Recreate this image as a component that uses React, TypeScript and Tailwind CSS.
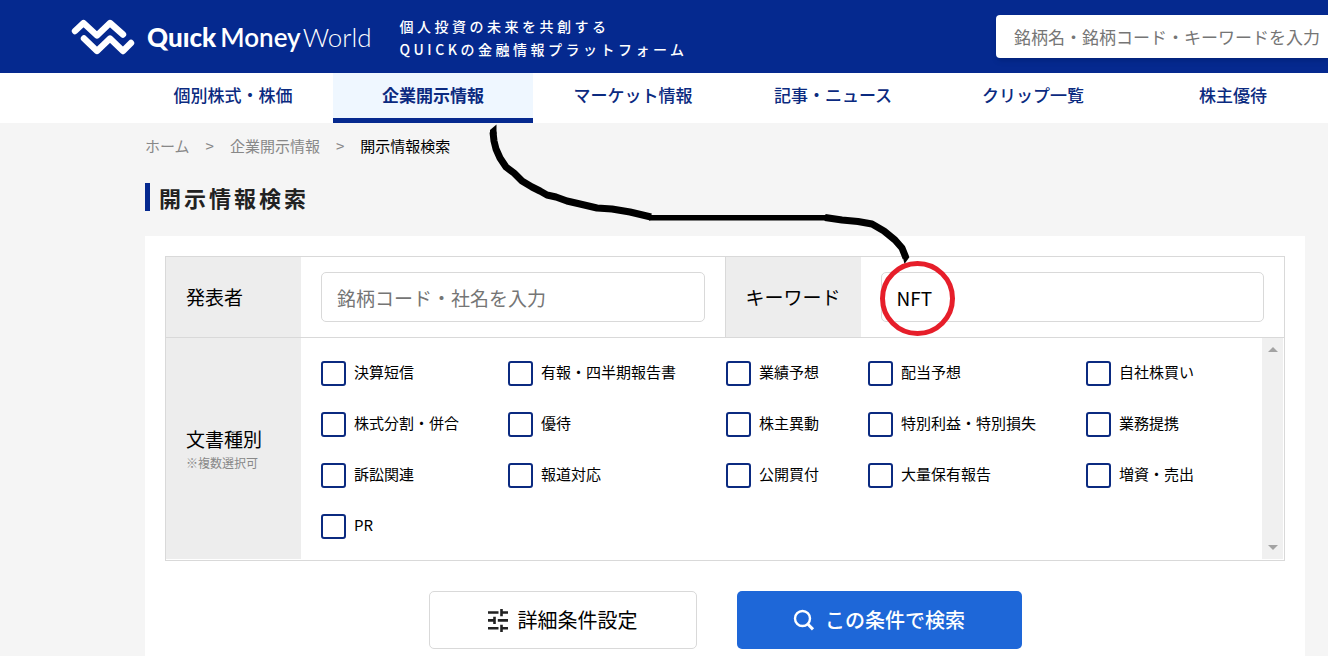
import { useState } from 'react';

const navItems = ['個別株式・株価', '企業開示情報', 'マーケット情報', '記事・ニュース', 'クリップ一覧', '株主優待'];

const documentTypes = [
  '決算短信', '有報・四半期報告書', '業績予想', '配当予想', '自社株買い',
  '株式分割・併合', '優待', '株主異動', '特別利益・特別損失', '業務提携',
  '訴訟関連', '報道対応', '公開買付', '大量保有報告', '増資・売出',
  'PR'
];

function Logo() {
  return (
    <a href="#" aria-label="Quick Money World" className="flex items-center gap-3 text-white">
      <svg viewBox="0 0 64 38" className="w-16 h-[38px]" fill="none" stroke="currentColor" strokeWidth="6.4" strokeLinecap="round" strokeLinejoin="round">
        <path d="M4 13 L12.500 5 L26 17.500 L39 5 L52 16.500" />
        <path d="M13 20.500 L26 33 L39 20.500 L52 33 L60 25" />
      </svg>
      <span className="flex items-baseline text-[26px] leading-8 whitespace-nowrap font-['Lato',sans-serif]">
        <span className="font-black mr-1">Quıck</span>
        <span className="font-semibold mr-0.5">Money</span>
        <span className="font-light">World</span>
      </span>
    </a>
  );
}

function Header() {
  return (
    <header className="flex h-[73px] items-center overflow-hidden bg-[#05298f] pl-[71px]">
      <Logo />
      <p className="flex-1 pl-7 pt-0.5 text-sm leading-[23px] tracking-[0.25em] font-medium text-white whitespace-nowrap">
        個人投資の未来を共創する
        <br />
        QUICKの金融情報プラットフォーム
      </p>
      <input
        type="text"
        aria-label="銘柄検索"
        placeholder="銘柄名・銘柄コード・キーワードを入力"
        className="h-[43px] w-[332px] shrink-0 rounded-l bg-white pl-[18px] text-[17px] shadow-md placeholder:text-[#757575] focus:outline-none"
      />
    </header>
  );
}

function MainNav() {
  return (
    <nav className="flex h-[50px] overflow-hidden bg-white pl-[133px]">
      {navItems.map((item) => (
        <a
          key={item}
          href="#"
          className={`w-[200px] shrink-0 pt-2 text-center text-[17px] leading-7 text-[#0b2a80] ${
            item === '企業開示情報' ? 'border-b-[5px] border-[#05298f] bg-[#eff7ff] font-bold' : 'font-medium'
          }`}
        >
          {item}
        </a>
      ))}
    </nav>
  );
}

function Breadcrumb() {
  return (
    <nav aria-label="パンくず" className="flex gap-4 pt-3 text-[15px] leading-[22px] text-[#888]">
      <a href="#">ホーム</a>
      <span>&gt;</span>
      <a href="#">企業開示情報</a>
      <span>&gt;</span>
      <span className="text-black">開示情報検索</span>
    </nav>
  );
}

function TuneIcon() {
  return (
    <svg viewBox="0 0 20 23" className="h-[23px] w-5" fill="none" stroke="#222" strokeWidth="2.600">
      <path d="M0 3.500 H10.500 M13.500 0 V7.200 M13.500 3.500 H20" />
      <path d="M0 11.400 H6.500 M6.500 7.800 V15 M9.800 11.400 H20" />
      <path d="M0 19.300 H10.500 M13.500 15.800 V23 M13.500 19.300 H20" />
    </svg>
  );
}

function SearchIcon() {
  return (
    <svg viewBox="0 0 22 22" className="size-[22px]" fill="none" stroke="currentColor" strokeWidth="2.400">
      <circle cx="9.500" cy="9.500" r="7.500" />
      <path d="M14.500 14.800 L20 20.400" strokeWidth="3" />
    </svg>
  );
}

function SearchForm() {
  const [keyword, setKeyword] = useState('NFT');
  const [selected, setSelected] = useState<string[]>([]);

  const toggle = (type: string) => {
    setSelected((prev) => (prev.includes(type) ? prev.filter((t) => t !== type) : [...prev, type]));
  };

  return (
    <form className="mt-[25px] bg-white p-5" onSubmit={(e) => e.preventDefault()}>
      <div className="border border-[#d9d9d9] text-[19px]">
        <div className="flex h-[81px] border-b border-[#d9d9d9]">
          <label htmlFor="issuer" className="flex w-[135px] items-center bg-[#ededed] pl-5">発表者</label>
          <div className="flex flex-1 items-center px-5">
            <input id="issuer" type="text" placeholder="銘柄コード・社名を入力" className="h-[50px] w-full rounded-[5px] border border-[#d9d9d9] px-[15px] placeholder:text-[#757575]" />
          </div>
          <label htmlFor="keyword" className="flex w-[136px] items-center border-l border-[#d9d9d9] bg-[#ededed] pl-5">キーワード</label>
          <div className="flex flex-1 items-center px-5">
            <input id="keyword" type="text" value={keyword} onChange={(e) => setKeyword(e.target.value)} className="h-[50px] w-full rounded-[5px] border border-[#d9d9d9] px-[15px]" />
          </div>
        </div>

        <div className="flex pb-px pr-px">
          <div className="flex w-[135px] flex-col justify-center bg-[#ededed] pl-5">
            <span className="leading-7">文書種別</span>
            <span className="text-xs leading-5 text-[#888]">※複数選択可</span>
          </div>
          <div className="grid flex-1 grid-cols-[187fr_218fr_142fr_218fr_176fr] gap-y-[26px] pb-5 pl-5 pt-[23px]">
            {documentTypes.map((type) => (
              <label key={type} className="flex items-start gap-2 text-[15px] leading-[22px] whitespace-nowrap">
                <input
                  type="checkbox"
                  checked={selected.includes(type)}
                  onChange={() => toggle(type)}
                  className="size-[25px] appearance-none rounded-[3px] border-2 border-[#0b2a80] checked:bg-[#0b2a80]"
                />
                {type}
              </label>
            ))}
          </div>
          <div className="flex w-[21px] flex-col items-center justify-between bg-[#f0f0f0] py-[9px] text-[#a3a3a3]">
            <svg viewBox="0 0 10 5" className="h-[5px] w-2.5" fill="currentColor"><path d="M0 5 L5 0 L10 5 Z" /></svg>
            <svg viewBox="0 0 10 5" className="h-[5px] w-2.5" fill="currentColor"><path d="M0 0 L5 5 L10 0 Z" /></svg>
          </div>
        </div>
      </div>

      <div className="mt-[30px] flex justify-center gap-10 text-xl">
        <button type="button" className="flex h-[58px] w-[268px] items-center justify-center gap-2.5 rounded-[5px] border border-[#d9d9d9] bg-white">
          <TuneIcon />
          詳細条件設定
        </button>
        <button type="submit" className="flex h-[58px] w-[285px] items-center justify-center gap-2.5 rounded-[5px] bg-[#1e67d8] font-medium text-white">
          <SearchIcon />
          この条件で検索
        </button>
      </div>
    </form>
  );
}

// Hand-drawn pointer from the active tab to the keyword field
function Annotation() {
  return (
    <svg viewBox="0 0 480 220" className="pointer-events-none absolute left-[480px] top-[120px] h-[220px] w-[480px]" fill="none" strokeLinejoin="round">
      <path d="M13 12 L14 21 L16 29 L20 38 L26 47 L34 53 L42 61 L52 67 L60 71 L67 75 L76 77 L87 81 L100 84 L117 88 L132 89 L150 92 L171 97" stroke="#000" strokeWidth="7" />
      <path d="M10 14 L10 10 L16.500 4.500 L16.500 14 Z" fill="#000" />
      <path d="M169 97.700 L348 97.700" stroke="#000" strokeWidth="5.500" />
      <path d="M345 97.500 L362 100 L378 101.500 L392 104 L404 111 L415 120 L422 128 L426 138" stroke="#000" strokeWidth="7" />
      <path d="M422.500 136 L424.500 144 L429.500 137 Z" fill="#000" />
      <circle cx="437.500" cy="178.500" r="35" stroke="#e61e2a" strokeWidth="5" />
    </svg>
  );
}

export default function App() {
  return (
    <div className="relative min-h-screen overflow-hidden bg-[#f5f5f5] text-black font-['Noto_Sans_CJK_JP',sans-serif]">
      <Header />
      <MainNav />
      <main className="ml-[145px] mr-[23px]">
        <Breadcrumb />
        <h1 className="mt-[26px] border-l-[5px] border-[#05298f] pl-[9px] text-[22px] leading-7 tracking-[3px] font-bold text-[#222]">開示情報検索</h1>
        <SearchForm />
      </main>
      <Annotation />
    </div>
  );
}
